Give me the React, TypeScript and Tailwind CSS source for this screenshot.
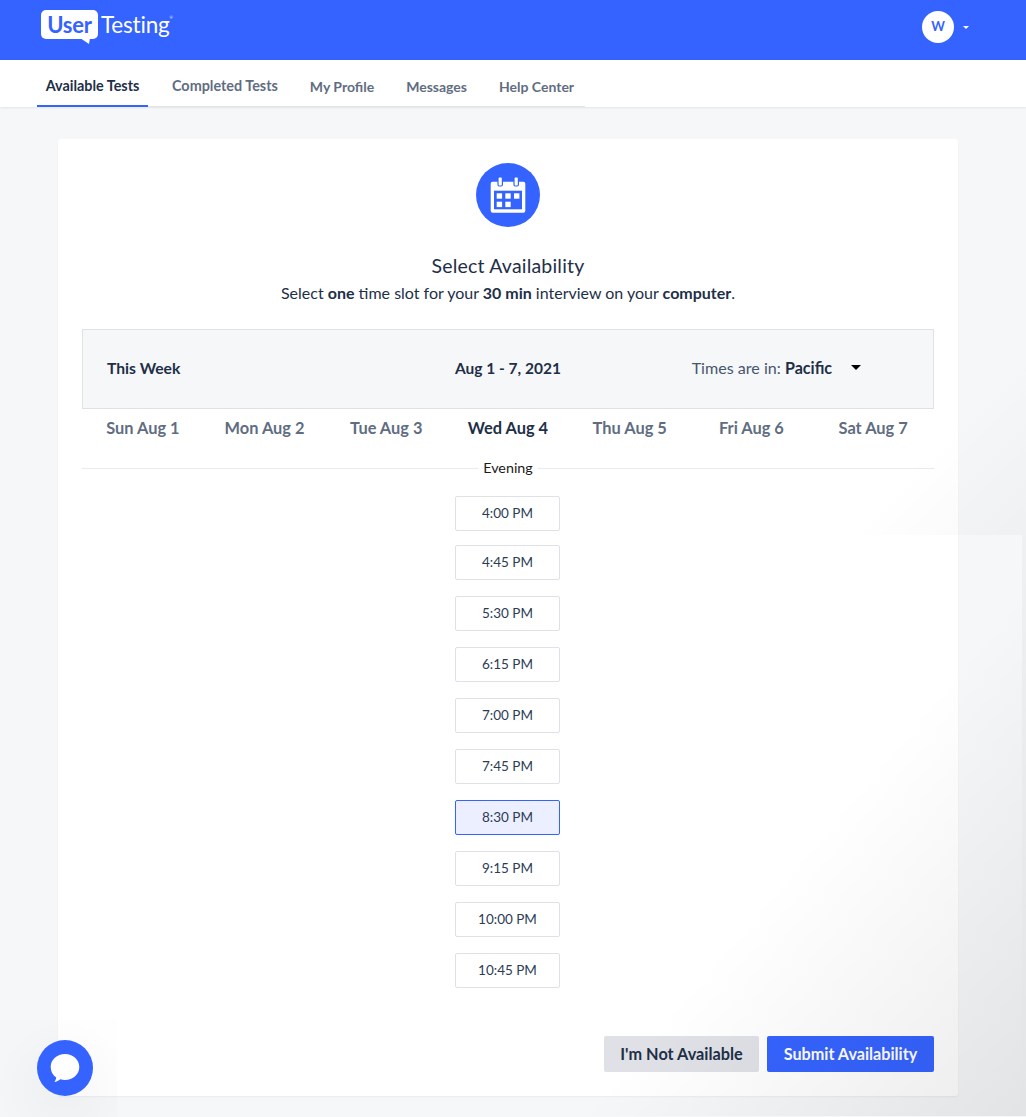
import React from "react";

const slots = ["4:00 PM", "4:45 PM", "5:30 PM", "6:15 PM", "7:00 PM", "7:45 PM", "8:30 PM", "9:15 PM", "10:00 PM", "10:45 PM"];
const days = ["Sun Aug 1", "Mon Aug 2", "Tue Aug 3", "Wed Aug 4", "Thu Aug 5", "Fri Aug 6", "Sat Aug 7"];
const tabs = ["Completed Tests", "My Profile", "Messages", "Help Center"];

function CalendarBadge() {
  return (
    <svg width="64" height="64" viewBox="0 0 64 64" className="block">
      <circle cx="32" cy="32" r="32" fill="#3563ff" />
      <rect x="14.7" y="18.7" width="34.6" height="31" rx="2" fill="#fff" />
      <rect x="18" y="27.7" width="28" height="18.6" fill="#3563ff" />
      <rect x="22" y="14" width="4.4" height="9" rx="1.2" fill="#fff" stroke="#3563ff" strokeWidth="1.2" />
      <rect x="38" y="14" width="4.4" height="9" rx="1.2" fill="#fff" stroke="#3563ff" strokeWidth="1.2" />
      <rect x="20.7" y="30.3" width="5.4" height="5.4" fill="#fff" />
      <rect x="29.3" y="30.3" width="5.4" height="5.4" fill="#fff" />
      <rect x="38" y="30.3" width="5.4" height="5.4" fill="#fff" />
      <rect x="20.7" y="38.7" width="5.4" height="5.4" fill="#fff" />
      <rect x="29.3" y="38.7" width="5.4" height="5.4" fill="#fff" />
    </svg>
  );
}

function ChatBubble() {
  return (
    <svg width="56" height="56" viewBox="0 0 56 56" className="block">
      <circle cx="28" cy="28" r="28" fill="#3563ff" />
      <path d="M28 14c8 0 14.300 5.600 14.300 13s-6.300 13-14.300 13c-1.700 0-3.300-.2-4.800-.7-1.600 1.300-3.600 2.500-5.900 2.700 1-1.200 1.700-2.800 1.900-4.600-3.500-2.400-5.500-6-5.500-10.400 0-7.400 6.300-13 14.300-13z" fill="#fff" />
    </svg>
  );
}

export default function App() {
  return (
    <div className="relative h-[1117px] overflow-hidden bg-[#f6f7f9] font-['Lato','Noto_Sans',sans-serif] text-[#1e2f48]">
      <header className="flex h-[60px] items-start justify-between bg-[#3563ff] pl-[41px] pr-[57px]">
        <div className="flex items-start pt-[10px]">
          <div className="relative flex h-[29px] w-[57px] items-center justify-center rounded-[5px] bg-white text-[22px] font-bold leading-none tracking-[-0.2px] text-[#3563ff]">
            User
            <svg width="10" height="6" viewBox="0 0 10 6" className="absolute left-[39px] top-[28px]">
              <path d="M0 0h10L9 6z" fill="#fff" />
            </svg>
          </div>
          <div className="ml-[3px] flex items-start text-[22.5px] font-normal leading-[29px] tracking-[-0.2px] text-white">
            Testing
            <span className="mt-[6px] text-[4px] leading-none">®</span>
          </div>
        </div>
        <div className="flex items-center pt-[11px]">
          <div className="flex h-8 w-8 items-center justify-center rounded-full bg-white text-[13px] font-bold text-[#3563ff]">W</div>
          <div className="ml-[9px] mt-[1px] h-0 w-0 border-x-[3px] border-t-[3px] border-x-transparent border-t-white" />
        </div>
      </header>

      <nav className="relative h-[47px] bg-white shadow-[0_1px_2px_rgba(0,0,0,0.08)]">
        <div className="ml-[37px] flex h-[47px] w-[548px] gap-4 whitespace-nowrap border-b border-[#e2e4e8]">
          <div className="flex h-[47px] w-[111px] shrink-0 items-center justify-center border-b-2 border-[#3563ff] pt-[6px] text-[14.4px] font-bold text-[#1e2f48]">
            Available Tests
          </div>
          {tabs.map((t) => (
            <div
              key={t}
              className={
                "flex h-[46px] shrink-0 items-center px-2 pt-[6px] font-bold text-[#5f6d82] " +
                (t === "Completed Tests" ? "text-[14.4px]" : "text-[14px]")
              }
            >
              {t}
            </div>
          ))}
        </div>
      </nav>

      <main className="ml-[58px] mt-8 h-[957px] w-[900px] rounded-[3px] bg-white p-6 shadow-[0_1px_2px_rgba(0,0,0,0.05)]">
        <div className="flex justify-center">
          <CalendarBadge />
        </div>
        <h1 className="mt-[26px] text-center text-[19.5px] font-normal leading-[26px] tracking-[0.2px] text-[#1e2f48]">Select Availability</h1>
        <p className="mt-[1px] text-center text-[16px] leading-[26px] text-[#1e2f48]">
          Select <b>one</b> time slot for your <b>30 min</b> interview on your <b>computer</b>.
        </p>

        <section className="mt-[23px] grid h-[80px] grid-cols-3 items-center border border-[#dfe1e6] bg-[#f6f7f9] px-6 text-[15.7px]">
          <div className="font-bold">This Week</div>
          <div className="text-center text-[15.5px] font-bold">Aug 1 - 7, 2021</div>
          <div className="flex items-center pl-[50px] text-[16.1px] text-[#46566d]">
            <span className="mt-[-1px]">
              Times are in: <b className="text-[#1e2f48]">Pacific</b>
            </span>
            <span className="ml-[19px] mt-[-2px] h-0 w-0 border-x-[5px] border-t-[5px] border-x-transparent border-t-black" />
          </div>
        </section>

        <div className="mt-[7px] grid h-[24px] grid-cols-7 items-center text-center text-[16.4px] font-bold text-[#5f6d82]">
          {days.map((d) => (
            <div key={d} className={d === "Wed Aug 4" ? "text-[#1e2f48]" : ""}>
              {d}
            </div>
          ))}
        </div>

        <div className="mt-[18px] flex h-[20px] items-center gap-[5px] text-[14.3px] text-[#1a1a1a]">
          <div className="h-px flex-1 bg-[#e8eaed]" />
          <span>Evening</span>
          <div className="h-px flex-1 bg-[#e8eaed]" />
        </div>

        <div className="mt-[18px] flex flex-col items-center pr-px">
          {slots.map((s, i) => (
            <div
              key={s}
              className={
                "flex h-[35px] w-[105px] items-center justify-center rounded-[2px] border text-[13.5px] text-[#2c3c54] " +
                (i === 0 ? "" : i === 1 ? "mt-[14px] " : "mt-4 ") +
                (s === "8:30 PM" ? "border-[#3563ff] bg-[#ebefff]" : "border-[#dfe1e6] bg-white")
              }
            >
              {s}
            </div>
          ))}
        </div>

        <div className="mt-[48px] flex justify-end gap-2">
          <button className="h-9 w-[155px] rounded-[2px] bg-[#dfe1e6] text-[16.3px] font-bold text-[#1e2f48]">I'm Not Available</button>
          <button className="h-9 w-[167px] rounded-[2px] bg-[#3563ff] text-[16.2px] font-bold text-white">Submit Availability</button>
        </div>
      </main>

      {/* shading that lies over the page */}
      <div className="pointer-events-none absolute right-0 top-[340px] h-[195px] w-[300px] bg-[linear-gradient(135deg,rgba(0,0,0,0)_62%,rgba(0,0,0,0.028)_100%)]" />
      <div className="pointer-events-none absolute right-[4px] top-[535px] h-[581px] w-[522px] bg-[linear-gradient(130deg,rgba(0,0,0,0)_56%,rgba(0,0,0,0.08)_100%)]" />
      <div className="pointer-events-none absolute bottom-[1px] right-0 top-[535px] w-[4px] bg-[linear-gradient(180deg,rgba(0,0,0,0.028),rgba(0,0,0,0.08))]" />
      <div className="pointer-events-none absolute bottom-0 left-0 h-[97px] w-[117px] bg-[radial-gradient(circle_at_55%_70%,rgba(0,0,0,0.03),rgba(0,0,0,0.005)_75%)]" />

      <div className="absolute bottom-[21px] left-[37px] rounded-full">
        <ChatBubble />
      </div>
    </div>
  );
}
